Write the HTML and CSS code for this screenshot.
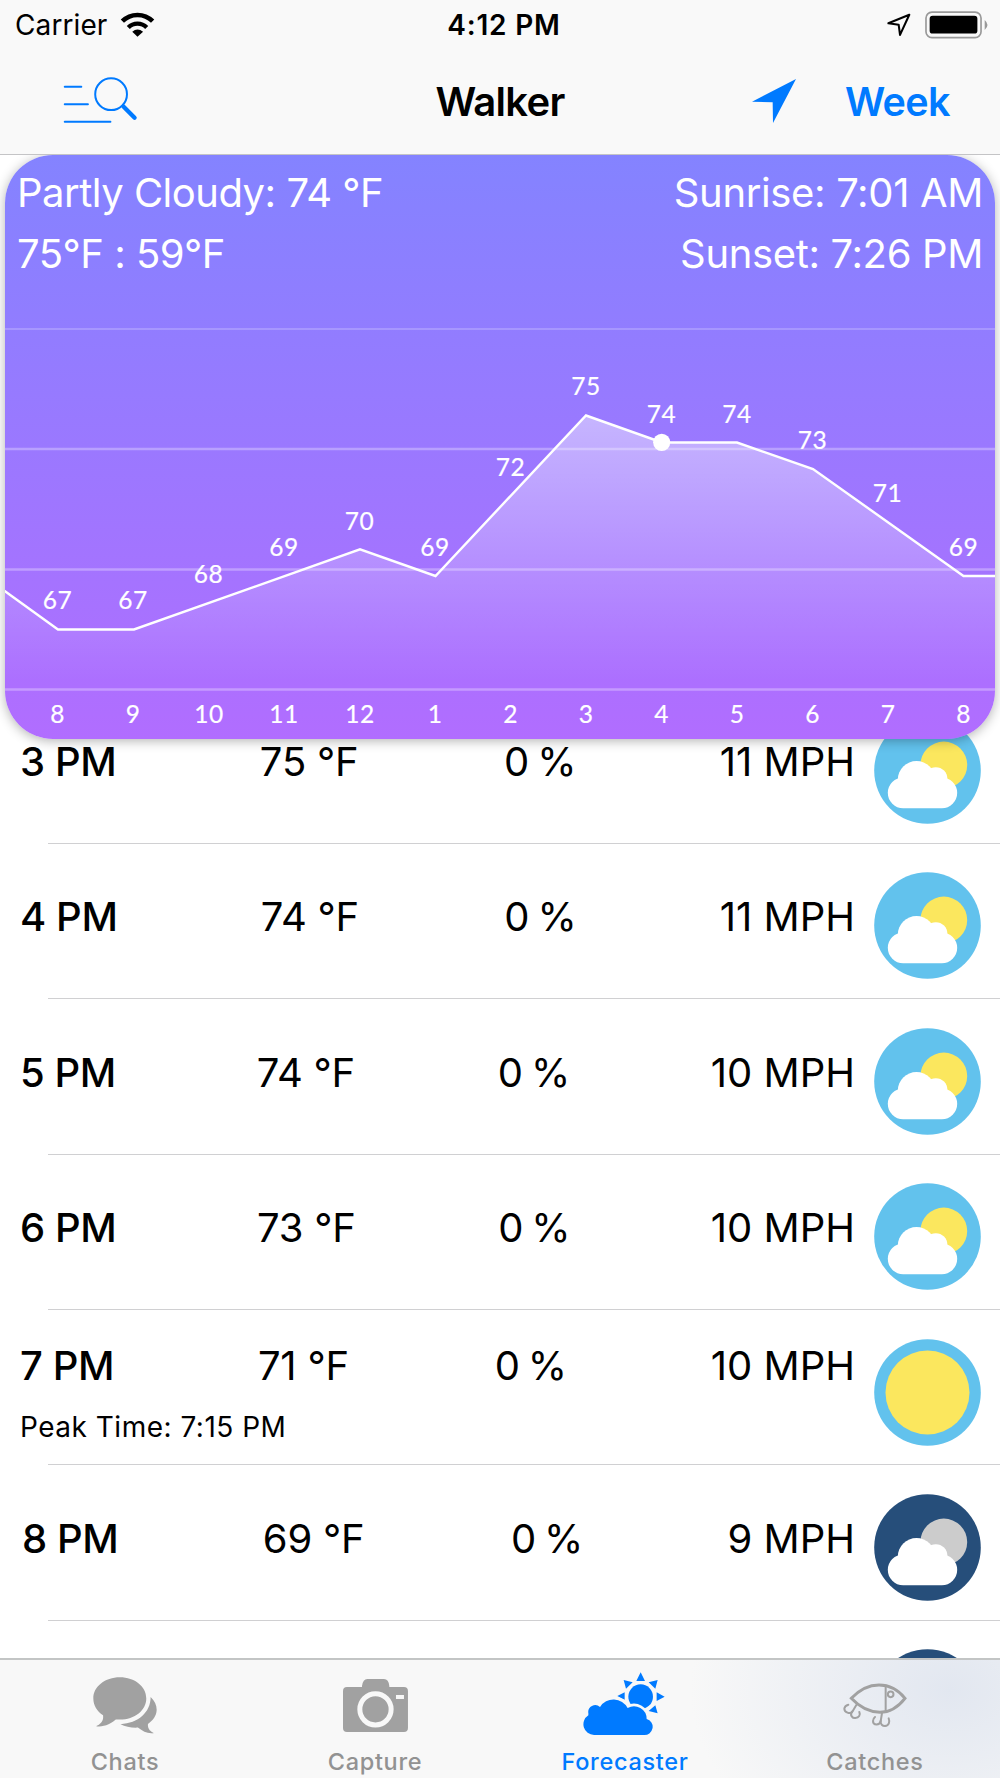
FILE: index.html
```html
<!DOCTYPE html>
<html lang="en">
<head>
  <meta charset="UTF-8" />
  <title>Walker - Forecaster</title>
  <link rel="stylesheet" href="styles.css">
</head>
<body>

  <!-- shared weather icons -->
  <svg class="sprite" xmlns="http://www.w3.org/2000/svg">
    <symbol id="cloud" viewBox="0 0 107 107">
      <rect x="13.8" y="60.4" width="69.4" height="30.8" rx="15.4" />
      <circle cx="42.5" cy="62.7" r="18.7" />
      <circle cx="61.8" cy="61.8" r="11.6" />
      <rect x="28" y="60" width="45" height="14" />
    </symbol>
    <symbol id="partly-day" viewBox="0 0 107 107">
      <circle cx="53.5" cy="53.5" r="53.3" fill="#62c2ed" />
      <circle cx="69.8" cy="48" r="23.4" fill="#fbe75e" />
      <use href="#cloud" fill="#fff" />
    </symbol>
    <symbol id="partly-night" viewBox="0 0 107 107">
      <circle cx="53.5" cy="53.5" r="53.3" fill="#264e7a" />
      <circle cx="69.8" cy="48" r="23.4" fill="#ccc" />
      <use href="#cloud" fill="#fff" />
    </symbol>
    <symbol id="clear-day" viewBox="0 0 107 107">
      <circle cx="53.5" cy="53.5" r="53.3" fill="#62c2ed" />
      <circle cx="53.5" cy="53.5" r="42" fill="#fbe75e" />
    </symbol>
  </svg>

  <header class="header">
    <div class="status-bar">
      <div class="status-left">
        <span>Carrier</span>
        <svg class="wifi" viewBox="361 34 104 76">
          <path d="M367 62 A65 65 0 0 1 459 62" fill="none" stroke="#000" stroke-width="14" />
          <path d="M385 81 A39 39 0 0 1 441 81" fill="none" stroke="#000" stroke-width="13" />
          <path d="M397 94 Q413 80 430 94 L413 109 Z" />
        </svg>
      </div>
      <div class="status-time">4:12 PM</div>
      <div class="status-right">
        <svg class="location" viewBox="1162 40 70 70">
          <path d="M1227 45 L1166 70 L1196 74 L1200 104 Z" fill="none" stroke="#000" stroke-width="6" stroke-linejoin="round" />
        </svg>
        <svg class="battery" viewBox="1275 31 190 84">
          <rect x="1278" y="34" width="166" height="77" rx="18" fill="none" stroke="#999" stroke-width="5" />
          <rect x="1289" y="45" width="144" height="54" rx="9" />
          <path d="M1455 58 Q1472 73 1455 88 Z" fill="#999" />
        </svg>
      </div>
    </div>
    <nav class="nav-bar">
      <svg class="nav-search" viewBox="188 228 224 142">
        <path d="M192 257.5 H242 M192 310.5 H262 M192 363.5 H330" />
        <circle cx="332" cy="280" r="48" />
        <path class="handle" d="M370 318 L403 351" />
      </svg>
      <h1>Walker</h1>
      <div class="nav-actions">
        <svg class="nav-arrow" viewBox="757 236 132 132">
          <path d="M889 236 L757 304 L819 306 L820 368 Z" />
        </svg>
        <a class="nav-week">Week</a>
      </div>
    </nav>
  </header>

  <main class="content">
    <section class="chart-card">
      <div class="summary">
        <div class="summary-line"><span>Partly Cloudy: 74 °F</span><span class="sun">Sunrise: 7:01 AM</span></div>
        <div class="summary-line"><span>75°F : 59°F</span><span class="sun">Sunset: 7:26 PM</span></div>
      </div>
      <svg class="chart" viewBox="5 285 990 454">
        <defs>
          <linearGradient id="areaFill" gradientUnits="userSpaceOnUse" x1="0" y1="415" x2="0" y2="680">
            <stop offset="0" stop-color="#fff" stop-opacity="0.45" />
            <stop offset="1" stop-color="#fff" stop-opacity="0" />
          </linearGradient>
        </defs>
        <path class="area" fill="url(#areaFill)" d="M5 591 L58 629.5 L134 629.5 L360 549.3 L435.5 576 L586 415.5 L662 442.5 L737 442.5 L813 469 L963.5 576 L995 576 L995 689 L5 689 Z" />
        <path class="grid-line faint" d="M5 329 H995" />
        <path class="grid-line" d="M5 449 H995 M5 569.5 H995 M5 689.5 H995" />
        <path class="line" d="M4 590.5 L58 629.5 L134 629.5 L360 549.3 L435.5 576 L586 415.5 L662 442.5 L737 442.5 L813 469 L963.5 576 L996 576" />
        <circle cx="661.7" cy="442.3" r="8.6" fill="#fff" />
        <g class="labels">
          <text x="57.5" y="609">67</text>
          <text x="133" y="609">67</text>
          <text x="208.5" y="583">68</text>
          <text x="284" y="556">69</text>
          <text x="359.5" y="529.5">70</text>
          <text x="435" y="556">69</text>
          <text x="510.5" y="475.5">72</text>
          <text x="586" y="395">75</text>
          <text x="661.5" y="422.5">74</text>
          <text x="737" y="422.5">74</text>
          <text x="812.5" y="449">73</text>
          <text x="887.5" y="502">71</text>
          <text x="963.5" y="556">69</text>
        </g>
        <g class="labels">
          <text x="57.5" y="722.5">8</text>
          <text x="133" y="722.5">9</text>
          <text x="209" y="722.5">10</text>
          <text x="284" y="722.5">11</text>
          <text x="360" y="722.5">12</text>
          <text x="435" y="722.5">1</text>
          <text x="510.5" y="722.5">2</text>
          <text x="586" y="722.5">3</text>
          <text x="661.5" y="722.5">4</text>
          <text x="737" y="722.5">5</text>
          <text x="812.5" y="722.5">6</text>
          <text x="888" y="722.5">7</text>
          <text x="963.5" y="722.5">8</text>
        </g>
      </svg>
    </section>

    <ul class="hours">
      <li class="hour">
        <div class="hour-info">
          <div class="hour-values"><b>3 PM</b><span>75 °F</span><span class="rain">0 %</span><span class="wind">11 MPH</span></div>
        </div>
        <svg class="weather"><use href="#partly-day" /></svg>
      </li>
      <li class="hour">
        <div class="hour-info">
          <div class="hour-values"><b>4 PM</b><span>74 °F</span><span class="rain">0 %</span><span class="wind">11 MPH</span></div>
        </div>
        <svg class="weather"><use href="#partly-day" /></svg>
      </li>
      <li class="hour">
        <div class="hour-info">
          <div class="hour-values"><b>5 PM</b><span>74 °F</span><span class="rain">0 %</span><span class="wind">10 MPH</span></div>
        </div>
        <svg class="weather"><use href="#partly-day" /></svg>
      </li>
      <li class="hour">
        <div class="hour-info">
          <div class="hour-values"><b>6 PM</b><span>73 °F</span><span class="rain">0 %</span><span class="wind">10 MPH</span></div>
        </div>
        <svg class="weather"><use href="#partly-day" /></svg>
      </li>
      <li class="hour">
        <div class="hour-info">
          <div class="hour-values"><b>7 PM</b><span>71 °F</span><span class="rain">0 %</span><span class="wind">10 MPH</span></div>
          <div class="peak">Peak Time: 7:15 PM</div>
        </div>
        <svg class="weather"><use href="#clear-day" /></svg>
      </li>
      <li class="hour">
        <div class="hour-info">
          <div class="hour-values short"><b>8 PM</b><span>69 °F</span><span class="rain">0 %</span><span class="wind">9 MPH</span></div>
        </div>
        <svg class="weather"><use href="#partly-night" /></svg>
      </li>
      <li class="hour">
        <div class="hour-info"></div>
        <svg class="weather"><use href="#partly-night" /></svg>
      </li>
    </ul>
  </main>

  <footer class="tab-bar">
    <a class="tab">
      <span class="tab-icon">
        <svg width="64" height="57" viewBox="279 140 191 170">
          <path d="M359 141 C404 141 438 169 438 204 C438 239 404 267 359 267 L347 267 C327 284 310 288 290 288 C289 287 289 286 292 285 C305 277 311 269 309 254 C291 242 280 225 280 204 C280 169 315 141 359 141 Z" />
          <path d="M451 200 C463 212 469 224 469 238 C469 255 458 270 443 280 C442 292 447 300 459 306 C460 308 459 309 456 308 C440 309 427 302 413 291 C393 292 376 288 361 281 C414 278 451 246 451 200 Z" />
        </svg>
      </span>
      <span class="tab-label">Chats</span>
    </a>
    <a class="tab">
      <span class="tab-icon">
        <svg class="camera" width="65.3" height="53.3" viewBox="1029 147 196 160">
          <path d="M1041 171 H1086 V168 Q1089 147 1102 147 H1152 Q1166 147 1168 168 V171 H1212 Q1224 171 1224 183 V294 Q1224 306 1212 306 H1041 Q1029 306 1029 294 V183 Q1029 171 1041 171 Z" />
          <circle cx="1126.5" cy="238" r="47" fill="none" stroke="#f8f8f8" stroke-width="15" />
          <rect x="1188" y="195" width="24" height="12" fill="#f8f8f8" />
        </svg>
      </span>
      <span class="tab-label">Capture</span>
    </a>
    <a class="tab active">
      <span class="tab-icon">
        <svg class="forecast" width="82" height="63.3" viewBox="250 126 246 190">
          <path d="M423 127 L410 153 H436 Z M474 150 L447 157 L467 176 Z M495 200 L471 187 V213 Z M474 250 L467 226 L447 243 Z M372 150 L399 157 L379 176 Z M353 198 L375 187 V209 Z" />
          <circle cx="423" cy="200" r="37" />
          <path d="M283 315 A32 32 0 0 1 266 256 V250 A21 21 0 0 1 301 231 A48 48 0 0 1 384 234 A38 38 0 0 1 441 267 A24.5 24.5 0 0 1 432 315 Z" stroke="#f8f8f8" stroke-width="16" />
          <path d="M283 315 A32 32 0 0 1 266 256 V250 A21 21 0 0 1 301 231 A48 48 0 0 1 384 234 A38 38 0 0 1 441 267 A24.5 24.5 0 0 1 432 315 Z" />
        </svg>
      </span>
      <span class="tab-label">Forecaster</span>
    </a>
    <a class="tab">
      <span class="tab-icon">
        <svg class="lure" width="64" height="45" viewBox="1027 160 192 135">
          <path stroke-width="9" d="M1052 206 Q1090 166 1135 166 Q1181 166 1213 206 Q1180 248 1138 248 Q1090 247 1052 206 Z" />
          <path d="M1155 168 V246" />
          <circle cx="1170" cy="194" r="8.5" />
          <path d="M1067 226 L1055 246 C1048 255 1031 248 1031 237 Q1032 228 1043 225" />
          <path d="M1055 245 C1045 257 1057 266 1064 265 C1075 264 1080 256 1076 247" />
          <path d="M1144 250 L1140 275 C1137 288 1117 288 1117 274 Q1117 267 1123 262" />
          <path d="M1140 273 C1138 284 1146 289 1153 289 C1165 288 1168 276 1164 266" />
        </svg>
      </span>
      <span class="tab-label">Catches</span>
    </a>
  </footer>

</body>
</html>
```
FILE: styles.css
```css
* { margin: 0; padding: 0; box-sizing: border-box; }

body {
  width: 1000px;
  height: 1778px;
  overflow: hidden;
  display: flex;
  flex-direction: column;
  background: #fff;
  color: #000;
  font-family: Inter, "Liberation Sans", sans-serif;
}

svg {
  display: block;
  flex-shrink: 0;
}

.sprite {
  position: absolute;
  width: 0;
  height: 0;
}

/* header */
.header {
  height: 155px;
  flex-shrink: 0;
  background: #f9f9f9;
  border-bottom: 1px solid #c4c4c6;
}

.status-bar {
  height: 50px;
  padding: 0 12px 0 15px;
  display: grid;
  grid-template-columns: 1fr auto 1fr;
  align-items: center;
  font-size: 28px;
}

.status-left, .status-right {
  display: flex;
  align-items: center;
}

.status-left {
  gap: 13px;
  letter-spacing: 0.1px;
}

.status-right {
  justify-content: flex-end;
  gap: 14px;
}

.status-time {
  padding-left: 5px;
  font-weight: 600;
  letter-spacing: 0.8px;
}

.wifi { width: 35px; height: 25px; margin-bottom: 2px; }
.location { width: 24px; height: 24px; }
.battery { width: 63px; height: 28px; margin-bottom: 1px; }

.nav-bar {
  height: 103px;
  padding: 0 50px;
  display: grid;
  grid-template-columns: 1fr auto 1fr;
  align-items: center;
}

.nav-bar h1 {
  font-size: 40px;
  font-weight: 600;
  letter-spacing: -0.7px;
}

.nav-search {
  width: 75px;
  height: 47px;
  margin: 0 0 3px 13px;
  fill: none;
  stroke: #007aff;
  stroke-width: 6;
  stroke-linecap: round;
}

.nav-search .handle { stroke-width: 13; }

.nav-actions {
  display: flex;
  align-items: center;
  justify-content: flex-end;
  gap: 49px;
}

.nav-arrow {
  width: 44px;
  height: 44px;
  margin-bottom: 2px;
  fill: #007aff;
}

.nav-week {
  color: #007aff;
  font-size: 39.5px;
  font-weight: 600;
  letter-spacing: -0.6px;
}

/* chart */
.content {
  flex: 1;
  min-height: 0;
  overflow: hidden;
}

.chart-card {
  position: relative;
  z-index: 1;
  height: 584px;
  margin: 0 5px;
  border-radius: 48px;
  overflow: hidden;
  background: linear-gradient(#8483ff, #b16dff);
  box-shadow: 0 2px 12px rgba(0, 0, 0, 0.3);
}

.summary {
  height: 130px;
  padding: 7px 12px 0;
  color: #fff;
  font-size: 40px;
  letter-spacing: -0.5px;
}

.summary .sun { letter-spacing: -0.35px; }

.summary-line {
  height: 61px;
  line-height: 61px;
  display: flex;
  justify-content: space-between;
}

.chart {
  width: 990px;
  height: 454px;
}

.grid-line {
  stroke: rgba(255, 255, 255, 0.3);
  stroke-width: 2.5;
}

.grid-line.faint {
  stroke: rgba(255, 255, 255, 0.2);
  stroke-width: 2;
}

.line {
  fill: none;
  stroke: #fff;
  stroke-width: 2.4;
}

.labels {
  fill: #fff;
  stroke: #fff;
  stroke-width: 0.2;
  font-family: Lato, sans-serif;
  font-size: 24.5px;
  letter-spacing: 0.5px;
  text-anchor: middle;
}

/* hourly list */
.hours {
  list-style: none;
  margin-top: -50.6px;
}

.hour {
  height: 155.4px;
  padding: 9px 19px 0 20px;
  display: flex;
  align-items: center;
  gap: 20px;
  background: linear-gradient(#d0d0d2, #d0d0d2) 48px 100% / 100% 1px no-repeat;
}

.hour-info {
  flex: 1;
  height: 100%;
  padding-bottom: 17px;
  display: flex;
  flex-direction: column;
  justify-content: center;
}

.hour-values {
  display: flex;
  justify-content: space-between;
  margin-right: -1px;
  font-size: 40px;
  line-height: 60px;
  letter-spacing: -0.2px;
}

.hour-values.short { padding-left: 2px; }

.hour-values b {
  font-weight: 500;
  letter-spacing: -0.4px;
}

.hour-values .rain {
  padding-left: 2px;
  word-spacing: -3px;
}

.hour-values .wind { letter-spacing: 0; }

.peak {
  margin-bottom: -14px;
  padding-top: 13px;
  font-size: 28px;
  line-height: 36px;
  letter-spacing: 0.5px;
}

.weather {
  width: 107px;
  height: 107px;
}

/* tab bar */
.tab-bar {
  position: relative;
  z-index: 2;
  height: 120px;
  flex-shrink: 0;
  display: flex;
  border-top: 2px solid #c3c5c5;
  background: radial-gradient(ellipse 260px 190px at 950px 30px, #e2e7f0, #f8f8f8);
}

.tab {
  flex: 1;
  display: flex;
  flex-direction: column;
  align-items: center;
  color: #929292;
  fill: #a1a1a1;
}

.tab.active {
  color: #007aff;
  fill: #007aff;
}

.tab-icon {
  height: 90px;
  display: flex;
  align-items: center;
}

.camera { margin: 1px 0 0 1px; }

.forecast { margin: 0 2px 2px 0; }

.lure {
  margin-right: 1px;
  fill: none;
  stroke: #a1a1a1;
  stroke-width: 6;
  stroke-linecap: round;
}

.tab-label {
  font-size: 23.5px;
  font-weight: 500;
  line-height: 24px;
  letter-spacing: 0.7px;
}
```
